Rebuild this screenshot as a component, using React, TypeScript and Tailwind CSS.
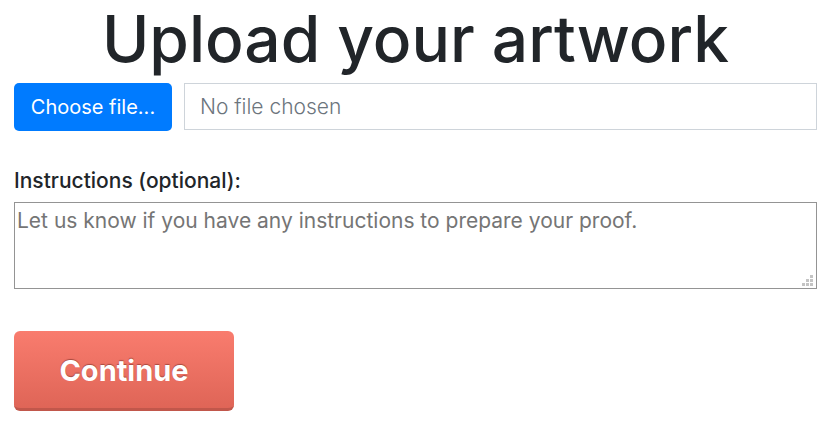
import { useRef, useState } from 'react';

function ResizeGrip() {
  return (
    <svg
      aria-hidden="true"
      viewBox="0 0 11 11"
      fill="#c4c4c4"
      shapeRendering="crispEdges"
      className="pointer-events-none absolute right-1 bottom-[3px] size-[11px]"
    >
      <rect x="8" y="0" width="3" height="3" />
      <rect x="4" y="4" width="3" height="3" />
      <rect x="8" y="4" width="3" height="3" />
      <rect x="0" y="8" width="3" height="3" />
      <rect x="4" y="8" width="3" height="3" />
      <rect x="8" y="8" width="3" height="3" />
    </svg>
  );
}

export default function App() {
  const fileInput = useRef<HTMLInputElement>(null);
  const [fileName, setFileName] = useState('');

  return (
    <main className="bg-white pr-[13px] pb-5 pl-3.5 font-['Inter','Liberation_Sans',sans-serif] text-[#212529]">
      <h1 className="text-center text-[64px] leading-[78px] font-medium">Upload your artwork</h1>
      <form onSubmit={(e) => e.preventDefault()}>
        <div className="mt-[5px] flex items-start gap-3">
          <button
            type="button"
            onClick={() => fileInput.current?.click()}
            className="h-12 w-[158px] shrink-0 rounded-[5px] bg-[#007bff] text-xl text-white"
          >
            Choose file...
          </button>
          <input
            ref={fileInput}
            type="file"
            aria-label="Artwork file"
            className="hidden"
            onChange={(e) => setFileName(e.target.files?.[0]?.name ?? '')}
          />
          <input
            type="text"
            readOnly
            aria-label="Chosen file"
            placeholder="No file chosen"
            value={fileName}
            className="h-[47px] min-w-0 flex-1 border border-[#ced4da] px-[15px] text-[21px] font-light text-[#495057] placeholder:text-[#6c757d]"
          />
        </div>
        <label htmlFor="instructions" className="mt-9 block text-[21px] leading-7 font-medium">
          Instructions (optional):
        </label>
        <div className="relative mt-[7px]">
          <textarea
            id="instructions"
            placeholder="Let us know if you have any instructions to prepare your proof."
            className="block h-[87px] w-full resize-none border border-[#949494] px-[2px] py-1 text-[21px] leading-7 placeholder:text-[#757575]"
          />
          <ResizeGrip />
        </div>
        <button
          type="submit"
          className="mt-[42px] h-20 w-[220px] rounded-md border-b-3 border-[#c1574b] bg-linear-to-b from-[#f97c6e] to-[#df6557] pt-[3px] text-[29px] font-bold text-white text-shadow-[0_-1px_1px_#a84a40]"
        >
          Continue
        </button>
      </form>
    </main>
  );
}
